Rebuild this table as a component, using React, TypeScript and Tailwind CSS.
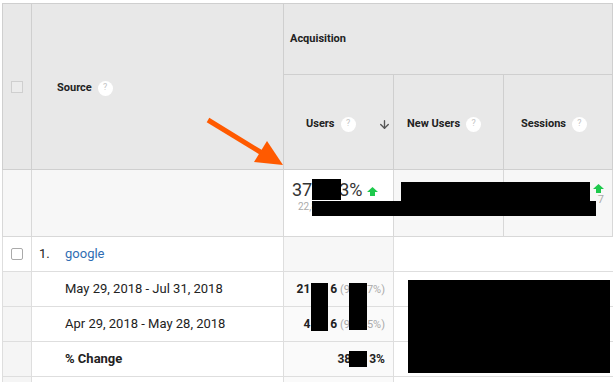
import { ArrowDown } from "lucide-react";

function Help() {
  return (
    <span className="ml-[6px] inline-flex h-[15px] w-[15px] items-center justify-center rounded-full bg-white text-[9px] font-normal text-[#c4c4c4]">
      ?
    </span>
  );
}

function UpArrow() {
  return (
    <svg width="11" height="9" viewBox="0 0 11 9" className="inline-block">
      <path d="M5.5 0 L11 5 L8 5 L8 9 L3 9 L3 5 L0 5 Z" fill="#1ec94c" />
    </svg>
  );
}

export default function App() {
  const font = { fontFamily: "Roboto, 'Liberation Sans', sans-serif" };
  return (
    <div className="relative h-[382px] w-[613px] overflow-hidden bg-white pl-[2px] pt-[3px]" style={font}>
      <table className="w-[610px] table-fixed border-collapse text-[#222]">
        <colgroup>
          <col className="w-[29px]" />
          <col className="w-[252px]" />
          <col className="w-[110px]" />
          <col className="w-[110px]" />
          <col className="w-[109px]" />
        </colgroup>
        <thead className="bg-[#e8e8e8]">
          <tr className="h-[71px]">
            <th rowSpan={2} className="border border-[#cfcfcf] align-middle">
              <span className="mx-auto block h-[12px] w-[12px] border border-[#cfcfcf] bg-[#ececec]" />
            </th>
            <th rowSpan={2} className="border border-[#cfcfcf] pl-[25px] pt-[3px] text-left text-[11px] font-bold">
              <span className="inline-flex items-center">
                Source
                <Help />
              </span>
            </th>
            <th colSpan={3} className="border border-[#cfcfcf] pl-[6px] text-left text-[11px] font-bold">
              Acquisition
            </th>
          </tr>
          <tr className="h-[95px] text-[11px] font-bold">
            <th className="border border-[#cfcfcf] pl-[22px] pt-[4px] text-left">
              <span className="flex items-center">
                Users
                <Help />
                <ArrowDown className="ml-auto mr-[2px] h-[13px] w-[13px] text-[#555]" strokeWidth={2.5} />
              </span>
            </th>
            <th className="border border-[#cfcfcf] pl-[13px] pt-[4px] text-left">
              <span className="flex items-center">
                New Users
                <Help />
              </span>
            </th>
            <th className="border border-[#cfcfcf] pl-[17px] pt-[4px] text-left">
              <span className="flex items-center">
                Sessions
                <Help />
              </span>
            </th>
          </tr>
        </thead>
        <tbody className="text-[13px]">
          <tr className="h-[67px] bg-[#f7f7f7]">
            <td className="border-x border-b border-[#d8d8d8]" />
            <td className="border-x border-b border-[#d8d8d8]" />
            <td className="border-x border-b border-[#d8d8d8] bg-white pl-[8px] align-top">
              <div className="mt-[8px] flex items-center text-[18px] leading-[22px] text-[#333]">
                37<span className="w-[27px]" />3%
                <span className="ml-[4px] mt-[1px]">
                  <UpArrow />
                </span>
              </div>
              <div className="pl-[6px] text-[10px] leading-[12px] text-[#aaa]">22,888 (100.00%)</div>
            </td>
            <td className="border-x border-b border-[#d8d8d8]" />
            <td className="border-x border-b border-[#d8d8d8] pr-[8px] align-top">
              <div className="mt-[14px] flex justify-end">
                <UpArrow />
              </div>
              <div className="text-right text-[11px] leading-[14px] text-[#aaa]">7</div>
            </td>
          </tr>
          <tr className="h-[35px]">
            <td className="border-x border-b border-[#dedede] text-center">
              <span className="mx-auto block h-[12px] w-[12px] rounded-[2px] border border-[#aaa] bg-white" />
            </td>
            <td className="border-x border-b border-[#dedede] pl-[7px]">
              <span className="inline-block w-[26px]">1.</span>
              <span className="text-[#2f6db3]">google</span>
            </td>
            <td className="border-x border-b border-[#dedede] bg-[#f7f7f7]" />
            <td colSpan={2} className="border-b border-l border-[#dedede]" />
          </tr>
          <tr className="h-[35px]">
            <td className="border-x border-b border-[#dedede] bg-[#f5f5f5]" />
            <td className="border-x border-b border-[#dedede] pl-[33px]">May 29, 2018 - Jul 31, 2018</td>
            <td className="border-x border-b border-[#dedede] bg-[#fafafa] pr-[8px] text-right text-[12px]">
              <span className="font-bold">21</span>
              <span className="inline-block w-[20px]" />
              <span className="font-bold">6</span>
              <span className="text-[11px] text-[#aaa]"> (9</span>
              <span className="inline-block w-[17px]" />
              <span className="text-[11px] text-[#aaa]">7%)</span>
            </td>
            <td colSpan={2} className="border-b border-l border-[#dedede]" />
          </tr>
          <tr className="h-[35px]">
            <td className="border-x border-b border-[#dedede] bg-[#f5f5f5]" />
            <td className="border-x border-b border-[#dedede] pl-[33px]">Apr 29, 2018 - May 28, 2018</td>
            <td className="border-x border-b border-[#dedede] bg-[#fafafa] pr-[8px] text-right text-[12px]">
              <span className="font-bold">4</span>
              <span className="inline-block w-[20px]" />
              <span className="font-bold">6</span>
              <span className="text-[11px] text-[#aaa]"> (9</span>
              <span className="inline-block w-[17px]" />
              <span className="text-[11px] text-[#aaa]">5%)</span>
            </td>
            <td colSpan={2} className="border-b border-l border-[#dedede]" />
          </tr>
          <tr className="h-[35px]">
            <td className="border-x border-b border-[#dedede] bg-[#f5f5f5]" />
            <td className="border-x border-b border-[#dedede] pl-[33px] font-bold">% Change</td>
            <td className="border-x border-b border-[#dedede] bg-[#fafafa] pr-[8px] text-right text-[12px] font-bold">
              38<span className="inline-block w-[18px]" />3%
            </td>
            <td colSpan={2} className="border-b border-l border-[#dedede]" />
          </tr>
          <tr className="h-[35px]">
            <td className="border-x border-[#dedede] bg-[#f5f5f5]" />
            <td className="border-x border-[#dedede]" />
            <td className="border-x border-[#dedede] bg-[#fafafa]" />
            <td colSpan={2} className="border-l border-[#dedede]" />
          </tr>
        </tbody>
      </table>

      {/* redactions */}
      <div className="absolute left-[312px] top-[179px] h-[21px] w-[29px] bg-black" />
      <div className="absolute left-[401px] top-[182px] h-[33px] w-[189px] bg-black" />
      <div className="absolute left-[312px] top-[201px] h-[15px] w-[284px] bg-black" />
      <div className="absolute left-[311px] top-[283px] h-[48px] w-[17px] bg-black" />
      <div className="absolute left-[349px] top-[283px] h-[47px] w-[18px] bg-black" />
      <div className="absolute left-[349px] top-[351px] h-[16px] w-[18px] bg-black" />
      <div className="absolute left-[408px] top-[280px] h-[93px] w-[202px] bg-black" />

      {/* annotation arrow */}
      <svg className="absolute left-0 top-0" width="613" height="382">
        <line x1="208" y1="120" x2="262" y2="153" stroke="#ff5a00" strokeWidth="5" />
        <polygon points="283,165 254,162 267,141" fill="#ff5a00" />
      </svg>
    </div>
  );
}
